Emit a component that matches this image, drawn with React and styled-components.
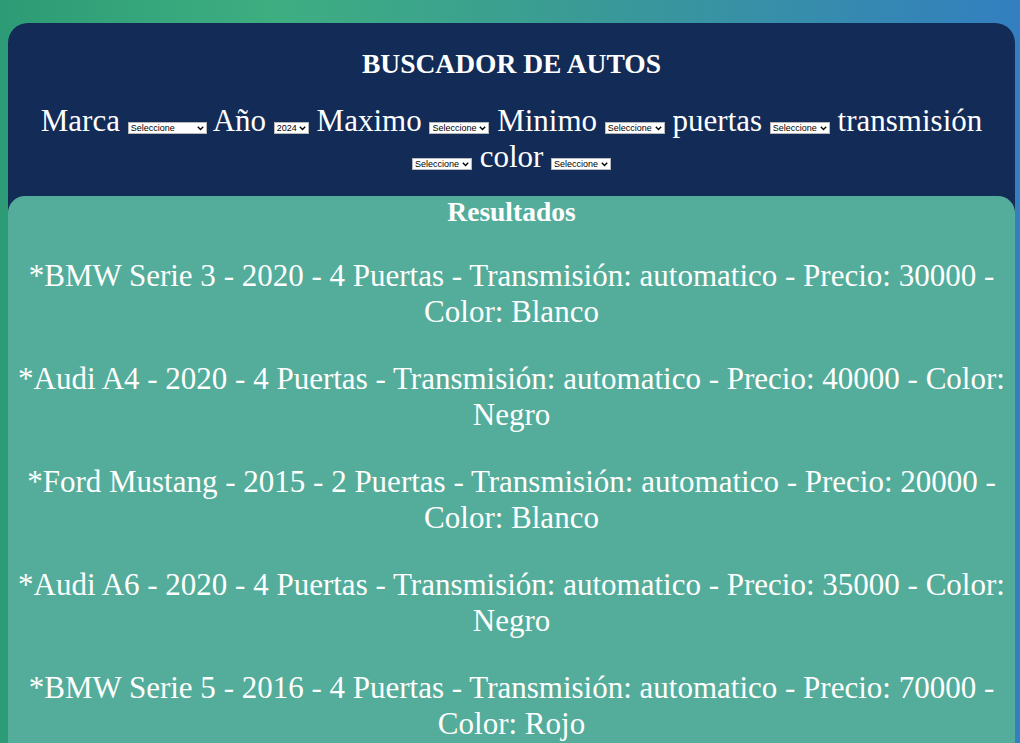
import React from 'react';
import styled, { createGlobalStyle } from 'styled-components';

const GlobalStyle = createGlobalStyle`
  html {
    scrollbar-width: none;
  }
  body {
    margin: 0;
    min-height: 743px;
    background: linear-gradient(90deg, #2d9c76 0%, #3eae81 27%, #3a9c94 55%, #337fc0 100%);
    background-attachment: fixed;
    font-family: "Liberation Serif", "Times New Roman", serif;
    color: #ffffff;
  }
`;

const Page = styled.div`
  padding: 23px 5px 0 8px;
`;

const Panel = styled.main`
  background-color: #122b57;
  border-radius: 20px;
  text-align: center;
`;

const Header = styled.header`
  padding: 25px 0 21px;
`;

const Title = styled.h1`
  margin: 0 0 24px;
  font-size: 27.5px;
  font-weight: bold;
  line-height: 31px;
`;

const Filters = styled.div`
  font-size: 31px;
  line-height: normal;
`;

const SelectWrap = styled.span`
  position: relative;
  display: inline-block;
  vertical-align: baseline;
`;

const Select = styled.select`
  appearance: none;
  -webkit-appearance: none;
  display: block;
  box-sizing: border-box;
  width: ${(p) => p.$w}px;
  height: 12px;
  padding: 0 10px 0 2px;
  margin: 0;
  font-family: "Liberation Sans", Arial, sans-serif;
  font-size: 9px;
  line-height: 10px;
  color: #000;
  background-color: #fff;
  border: 1px solid #b8b8b8;
  border-radius: 0;
`;

const Chevron = styled.svg`
  position: absolute;
  right: 3px;
  top: 4px;
  width: 7px;
  height: 5px;
  pointer-events: none;
`;

const Results = styled.section`
  background-color: #54ad9a;
  border-radius: 17px;
  padding-bottom: 1px;
`;

const ResultsTitle = styled.h2`
  margin: 0;
  font-size: 27.5px;
  font-weight: bold;
  line-height: 31px;
`;

const Item = styled.p`
  margin: 31px 0;
  font-size: 31px;
  line-height: normal;
`;

const filtros = [
  { label: 'Marca', w: 79, options: ['Seleccione', 'BMW', 'Audi', 'Ford', 'Mercedes Benz'] },
  { label: 'Año', w: 35, options: ['2024', '2023', '2022', '2021', '2020'] },
  { label: 'Maximo', w: 60, options: ['Seleccione', '10000', '20000', '30000'] },
  { label: 'Minimo', w: 60, options: ['Seleccione', '10000', '20000', '30000'] },
  { label: 'puertas', w: 60, options: ['Seleccione', '2', '4'] },
  { label: 'transmisión', w: 60, options: ['Seleccione', 'manual', 'automatico'] },
  { label: 'color', w: 60, options: ['Seleccione', 'Blanco', 'Negro', 'Rojo'] },
];

const autos = [
  { marca: 'BMW', modelo: 'Serie 3', year: 2020, puertas: 4, transmision: 'automatico', precio: 30000, color: 'Blanco' },
  { marca: 'Audi', modelo: 'A4', year: 2020, puertas: 4, transmision: 'automatico', precio: 40000, color: 'Negro' },
  { marca: 'Ford', modelo: 'Mustang', year: 2015, puertas: 2, transmision: 'automatico', precio: 20000, color: 'Blanco' },
  { marca: 'Audi', modelo: 'A6', year: 2020, puertas: 4, transmision: 'automatico', precio: 35000, color: 'Negro' },
  { marca: 'BMW', modelo: 'Serie 5', year: 2016, puertas: 4, transmision: 'automatico', precio: 70000, color: 'Rojo' },
];

const Dropdown = ({ width, options }) => (
  <SelectWrap>
    <Select $w={width} defaultValue={options[0]}>
      {options.map((o) => (
        <option key={o} value={o}>{o}</option>
      ))}
    </Select>
    <Chevron viewBox="0 0 7 5">
      <polyline points="0.8,0.8 3.5,3.6 6.2,0.8" fill="none" stroke="#000" strokeWidth="1.4" />
    </Chevron>
  </SelectWrap>
);

export default function App() {
  return (
    <>
      <GlobalStyle />
      <Page>
        <Panel>
          <Header>
            <Title>BUSCADOR DE AUTOS</Title>
            <Filters>
              {filtros.map((f, i) => (
                <React.Fragment key={f.label}>
                  {i > 0 && ' '}
                  {f.label} <Dropdown width={f.w} options={f.options} />
                </React.Fragment>
              ))}
            </Filters>
          </Header>
          <Results>
            <ResultsTitle>Resultados</ResultsTitle>
            {autos.map((a) => (
              <Item key={a.marca + a.modelo}>
                *{a.marca} {a.modelo} - {a.year} - {a.puertas} Puertas - Transmisión: {a.transmision} - Precio: {a.precio} - Color: {a.color}
              </Item>
            ))}
          </Results>
        </Panel>
      </Page>
    </>
  );
}
